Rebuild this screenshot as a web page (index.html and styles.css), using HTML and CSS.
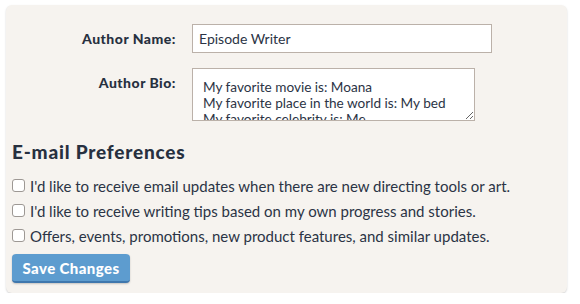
FILE: index.html
```html
<!DOCTYPE html>
<html lang="en">
<head>
  <meta charset="UTF-8" />
  <title>Author Settings</title>
  <link rel="stylesheet" href="styles.css">
</head>
<body>
  <form class="panel">
    <div class="field">
      <label class="field-label" for="name">Author Name:</label>
      <input class="text-input" id="name" type="text" value="Episode Writer">
    </div>
    <div class="field">
      <label class="field-label" for="bio">Author Bio:</label>
      <textarea class="bio-input" id="bio">My favorite movie is: Moana
My favorite place in the world is: My bed
My favorite celebrity is: Me</textarea>
    </div>
    <h2 class="section-title">E-mail Preferences</h2>
    <label class="check-row"><input type="checkbox"><span>I'd like to receive email updates when there are new directing tools or art.</span></label>
    <label class="check-row"><input type="checkbox"><span>I'd like to receive writing tips based on my own progress and stories.</span></label>
    <label class="check-row"><input type="checkbox"><span>Offers, events, promotions, new product features, and similar updates.</span></label>
    <button class="btn" type="button">Save Changes</button>
  </form>
</body>
</html>
```

FILE: styles.css
```css
* {
  margin: 0;
  padding: 0;
  box-sizing: border-box;
}
body {
  background: #fff;
  font-family: 'Lato', sans-serif;
  color: #2b3445;
  padding: 5px 13px 0 6px;
}
.panel {
  width: 561px;
  height: 288px;
  background: #f6f3ef;
  border-radius: 6px;
  box-shadow: 0 1px 2px rgba(0, 0, 0, 0.18);
  padding: 19px 6px 0 6px;
}
.field {
  display: flex;
  align-items: flex-start;
  margin-bottom: 15px;
}
.field-label {
  width: 180px;
  text-align: right;
  font-weight: 900;
  font-size: 14px;
  letter-spacing: 0.5px;
  padding-top: 6px;
  padding-right: 16px;
  color: #27303f;
}
.text-input {
  width: 300px;
  height: 29px;
  border: 1px solid #bbb1a9;
  background: #fff;
  font-family: 'Lato', sans-serif;
  font-size: 14px;
  color: #2b3445;
  padding: 0 6px;
}
.bio-input {
  width: 283px;
  height: 53px;
  border: 1px solid #bbb1a9;
  background: #fff;
  font-family: 'Lato', sans-serif;
  font-size: 13.6px;
  line-height: 16px;
  color: #2b3445;
  padding: 10px 10px 0 10px;
  resize: vertical;
  overflow: hidden;
}
.section-title {
  font-size: 19px;
  font-weight: 900;
  margin-top: 19px;
  margin-bottom: 10px;
  color: #27303f;
  letter-spacing: 0.8px;
}
.check-row {
  display: flex;
  align-items: center;
  height: 25px;
  font-size: 15px;
  color: #2b3445;
}
.check-row input {
  appearance: none;
  width: 13px;
  height: 13px;
  margin-right: 5px;
  border: 1px solid #9d9894;
  border-radius: 3px;
  background: #fff;
}
.btn {
  margin-top: 6px;
  width: 118px;
  height: 29px;
  background: #5d9ccf;
  border: none;
  border-bottom: 2px solid #3f77ad;
  border-radius: 4px;
  color: #fff;
  font-family: 'Lato', sans-serif;
  font-weight: 900;
  font-size: 15px;
  letter-spacing: 0.4px;
  box-shadow: 0 1px 2px rgba(0, 0, 0, 0.2);
}
```
